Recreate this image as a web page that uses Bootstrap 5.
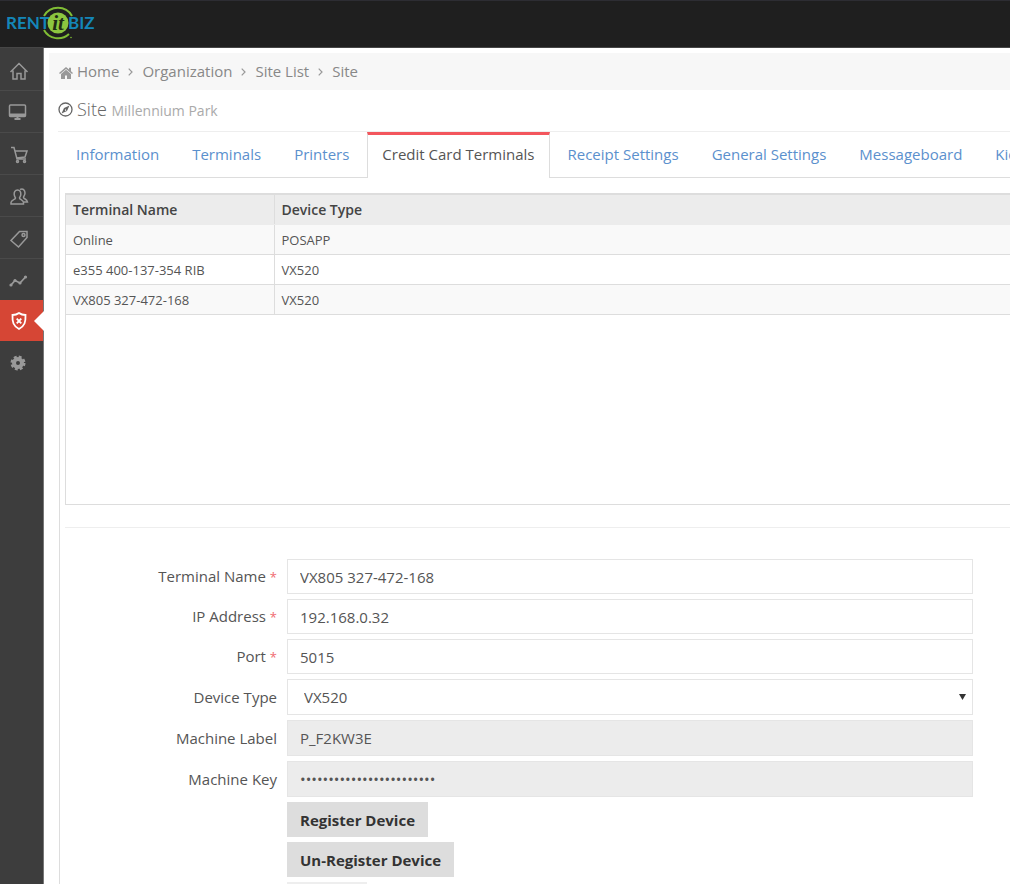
<!DOCTYPE html>
<html lang="en">
<head>
<meta charset="utf-8">
<meta name="viewport" content="width=device-width, initial-scale=1">
<title>Site - Millennium Park</title>
<link href="https://cdn.jsdelivr.net/npm/bootstrap@5.3.0/dist/css/bootstrap.min.css" rel="stylesheet">
<style>
  body { font-family: "Open Sans", sans-serif; font-size: 15px; line-height: 20px; color: #555; background: #fff; }
  a { text-decoration: none; }
  .topbar { height: 48px; background: #1f1f1f; border-top: 1px solid #2d2d33; border-bottom: 1px solid #464646; }
  .logo-words { font: 700 17px Lato, sans-serif; fill: #1486b8; }
  .logo-it { font: italic 700 21px "Liberation Serif", serif; fill: #1f2a14; }
  .sidebar { width: 44px; background: #3d3d3d; border-right: 1px solid #777; flex: none; padding-top: 1px; }
  .sidebar a { height: 42px; padding: 2px 0 0 8px; border-bottom: 1px solid #4a4a4a; color: #999; }
  .sidebar a.active { height: 41px; margin-top: -1px; background: #d64635; border-color: #d64635; color: #fff; position: relative; }
  .sidebar a.active::after { content: ""; position: absolute; right: -1px; top: 11px; border: 10px solid transparent; border-left: 0; border-right-color: #fff; }
  .sidebar a:last-child { border-bottom: 0; }
  .sidebar svg { fill: none; stroke: currentColor; stroke-width: 1.5; }
  .shell { height: calc(100vh - 48px); overflow: hidden; }
  .main { min-width: 0; overflow: hidden; padding: 5px 0 0 5px; }
  .crumbs { background: #f7f7f7; height: 37px; padding: 0 0 2px 10px; }
  .crumbs a, .crumbs span { color: #888; }
  .crumbs svg.sep { margin: 2px 9px 0; }
  .heading { height: 42px; margin-left: 9px; border-bottom: 1px solid #eee; color: #666; padding-bottom: 2px; }
  .heading h1 { font-size: 18px; line-height: 24px; font-weight: 300; }
  .heading small { font-size: 14px; font-weight: 400; color: #aaa; }
  .site-tabs { margin-left: 10px; padding-left: 2px; flex-wrap: nowrap; height: 46px; width: max-content; min-width: calc(100% - 10px); border-color: #ddd; }
  .site-tabs .nav-link { height: 46px; white-space: nowrap; padding: 12px 15px; margin-right: 3px; border: 0 solid transparent; border-radius: 0; color: #5b90cd; }
  .site-tabs .nav-link.active { border: 1px solid #ddd; border-top: 3px solid #f3565d; border-bottom: 0; padding: 9px 14px; color: #555; background: #fff; }
  .panel { margin-left: 10px; border-left: 1px solid #ddd; padding: 15px 0 10px 5px; }
  .grid-box { border: 1px solid #ddd; border-top-width: 2px; border-right: 0; height: 312px; }
  .grid-box table { --bs-table-color: #555; font-size: 13px; margin: 0; table-layout: fixed; border-color: #ddd; }
  .grid-box th, .grid-box td { padding: 5px 6px 4px 7px; border-bottom: 1px solid #ddd; }
  .grid-box th { font-size: 14px; font-weight: 600; background: #ececec; color: #444; border-bottom-color: #ececec; padding-bottom: 4px; }
  .grid-box th:first-child, .grid-box td:first-child { width: 208px; border-right: 1px solid #ddd; }
  .grid-box tbody tr:nth-child(odd) td { background: #f9f9f9; }
  .divider { border-top: 1px solid #eee; margin: 22px 0 31px; }
  .fields { display: grid; grid-template-columns: 212px 1fr; column-gap: 10px; row-gap: 5px; padding-right: 37px; align-items: center; }
  .fields label { text-align: right; }
  .fields label span { color: #f06a70; font-size: 13px; }
  .fields .form-control, .fields .form-select { height: 35px; padding: 6px 12px; border: 1px solid #e5e5e5; border-radius: 0; font-size: 15px; line-height: 20px; color: #555; }
  .fields .form-select { height: 36px; padding-left: 16px; background-size: 7px 6px; background-position: right 6px center;
    background-image: url("data:image/svg+xml,%3csvg xmlns='http://www.w3.org/2000/svg' viewBox='0 0 7 6'%3e%3cpath fill='%23333' d='M0 0h7L3.5 6z'/%3e%3c/svg%3e"); }
  .fields .form-control[readonly] { height: 36px; background: #ececec; }
  .fields .btn { grid-column: 2; justify-self: start; height: 35px; padding: 7px 13px; border: 0; border-radius: 0; background: #ddd; color: #333; font-size: 15px; line-height: 20px; font-weight: 700; }
  .fields .btn-plain { padding: 7px 15px; background: #eee; }
</style>
</head>
<body>
<header class="topbar d-flex align-items-center">
  <a href="#" aria-label="RENT it BIZ">
    <svg class="d-block" width="104" height="46" viewBox="0 0 104 46">
      <path d="M44 15A16 16 0 0 1 72 15M44 29A16 16 0 0 0 69 33" fill="none" stroke="#80bd35" stroke-width="2"/>
      <text class="logo-words" x="6" y="28">RENT</text>
      <text class="logo-words" x="68" y="28">BIZ</text>
      <circle cx="58" cy="22" r="10.500" fill="#8cc63f"/>
      <text class="logo-it" x="58" y="29" text-anchor="middle">it</text>
      <circle cx="71" cy="36.500" r=".8" fill="#80bd35"/>
    </svg>
  </a>
</header>
<div class="shell d-flex">
  <nav class="sidebar d-flex flex-column" aria-label="Main">
    <a href="#" class="d-flex align-items-center" aria-label="Home"><svg width="22" height="22" viewBox="0 0 22 22"><path d="M2.500 12 11 3.500l8.500 8.500M5 10.500V19h4v-5.500h4V19h4v-8.500"/></svg></a>
    <a href="#" class="d-flex align-items-center" aria-label="Terminals"><svg width="22" height="22" viewBox="0 0 22 22"><rect x="1.500" y="3" width="16" height="11.500" rx="1"/><path d="M1.500 13h16" stroke-width="3"/><path d="M9.500 14v3M6.500 17h6" stroke-width="2"/></svg></a>
    <a href="#" class="d-flex align-items-center" aria-label="Sales"><svg width="22" height="22" viewBox="0 0 22 22"><path d="M3 3.500h3L9 15h9M7 7h12l-2 6-8.500 1"/><circle cx="9.500" cy="17.500" r="1"/><circle cx="16.500" cy="17.500" r="1"/></svg></a>
    <a href="#" class="d-flex align-items-center" aria-label="Customers"><svg width="22" height="22" viewBox="0 0 22 22"><path d="M9.500 4C7 4 6 6 6.200 8.500c.2 2 1 2.500 1.300 3.500.2 1.500-4.500 2-4.500 4.500V18h12.500v-1.500c0-2.500-4.200-3-4-4.500.2-1 1.200-1.500 1.300-3.500C13 6 12 4 9.500 4zM12 3.500c3-1.500 5 .5 5 3.500 0 2.500-1.500 3-1.500 4.500 0 1.200 3.500 1.500 4 4.500h-4"/></svg></a>
    <a href="#" class="d-flex align-items-center" aria-label="Prices"><svg width="22" height="22" viewBox="0 0 22 22"><path d="M11.500 3.500H19v6L10.500 19 3 12.500z"/><circle cx="15.500" cy="7" r="1.500"/></svg></a>
    <a href="#" class="d-flex align-items-center" aria-label="Reports"><svg width="22" height="22" viewBox="0 0 22 22"><path d="m3 15 4-4.500 5 2.500 5.500-6" stroke-width="1.800"/><g fill="currentColor" stroke="none"><circle cx="3" cy="15" r="1.600"/><circle cx="7" cy="10.500" r="1.600"/><circle cx="12" cy="13" r="1.600"/><circle cx="17.500" cy="7" r="1.600"/></g></svg></a>
    <a href="#" class="active d-flex align-items-center" aria-label="Organization"><svg width="22" height="22" viewBox="0 0 22 22"><path d="M11 3c2 1.500 4 2 6.500 2 .3 7-.8 11-6.500 14-5.700-3-6.800-7-6.500-14C7 5 9 4.500 11 3zM8.700 8.700l4.600 4.600M13.300 8.700l-4.600 4.600" stroke-width="1.800"/></svg></a>
    <a href="#" class="d-flex align-items-center" aria-label="Settings"><svg width="22" height="22" viewBox="0 0 22 22"><circle cx="10" cy="11" r="4" stroke-width="4"/><circle cx="10" cy="11" r="6.200" stroke-width="2.600" stroke-dasharray="2.800 2.070"/></svg></a>
  </nav>
  <main class="main flex-grow-1">
    <nav class="crumbs d-flex align-items-center" aria-label="breadcrumb">
      <svg width="14" height="12" viewBox="0 0 14 12" class="me-1 mt-1" fill="#999"><path d="M7 0 0 6l1 1 6-5 6 5 1-1-2-1.700V.8h-2v1.800zM7 2.800 2 7V12h4V8.500h2V12h4V7z"/></svg>
      <a href="#">Home</a>
      <svg class="sep" width="5" height="8" viewBox="0 0 5 8" fill="none" stroke="#999" stroke-width="1.200"><path d="m.7.700 3.300 3.300L.7 7.300"/></svg>
      <a href="#">Organization</a>
      <svg class="sep" width="5" height="8" viewBox="0 0 5 8" fill="none" stroke="#999" stroke-width="1.200"><path d="m.7.700 3.300 3.300L.7 7.300"/></svg>
      <a href="#">Site List</a>
      <svg class="sep" width="5" height="8" viewBox="0 0 5 8" fill="none" stroke="#999" stroke-width="1.200"><path d="m.7.700 3.300 3.300L.7 7.300"/></svg>
      <span>Site</span>
    </nav>
    <div class="heading d-flex align-items-center">
      <svg width="15" height="15" viewBox="0 0 15 15" class="me-1"><circle cx="7.500" cy="7.500" r="6.500" fill="none" stroke="#666" stroke-width="1.300"/><path d="M11.500 3.500 9 9l-5.500 2.500L6 6zM7 7v2l1.500-.8z" fill="#666" fill-rule="evenodd"/></svg>
      <h1 class="m-0">Site <small>Millennium Park</small></h1>
    </div>
    <ul class="nav nav-tabs site-tabs">
      <li class="nav-item"><a class="nav-link" href="#">Information</a></li>
      <li class="nav-item"><a class="nav-link" href="#">Terminals</a></li>
      <li class="nav-item"><a class="nav-link" href="#">Printers</a></li>
      <li class="nav-item"><a class="nav-link active" aria-current="page" href="#">Credit Card Terminals</a></li>
      <li class="nav-item"><a class="nav-link" href="#">Receipt Settings</a></li>
      <li class="nav-item"><a class="nav-link" href="#">General Settings</a></li>
      <li class="nav-item"><a class="nav-link" href="#">Messageboard</a></li>
      <li class="nav-item"><a class="nav-link" href="#">Kiosk</a></li>
    </ul>
    <section class="panel">
      <div class="grid-box">
        <table class="table">
          <thead><tr><th scope="col">Terminal Name</th><th scope="col">Device Type</th></tr></thead>
          <tbody>
            <tr><td>Online</td><td>POSAPP</td></tr>
            <tr><td>e355 400-137-354 RIB</td><td>VX520</td></tr>
            <tr><td>VX805 327-472-168</td><td>VX520</td></tr>
          </tbody>
        </table>
      </div>
      <div class="divider"></div>
      <form class="fields">
        <label for="name">Terminal Name <span>*</span></label>
        <input class="form-control" id="name" type="text" value="VX805 327-472-168">
        <label for="ip">IP Address <span>*</span></label>
        <input class="form-control" id="ip" type="text" value="192.168.0.32">
        <label for="port">Port <span>*</span></label>
        <input class="form-control" id="port" type="text" value="5015">
        <label for="device">Device Type</label>
        <select class="form-select" id="device"><option>VX520</option></select>
        <label for="machine">Machine Label</label>
        <input class="form-control" id="machine" type="text" value="P_F2KW3E" readonly>
        <label for="key">Machine Key</label>
        <input class="form-control" id="key" type="password" value="abcdefghijklmnopqrstuvwx" autocomplete="off" readonly>
        <button class="btn" type="button">Register Device</button>
        <button class="btn" type="button">Un-Register Device</button>
        <button class="btn btn-plain" type="button">Cancel</button>
      </form>
    </section>
  </main>
</div>
<script src="https://cdn.jsdelivr.net/npm/bootstrap@5.3.0/dist/js/bootstrap.bundle.min.js"></script>
</body>
</html>
